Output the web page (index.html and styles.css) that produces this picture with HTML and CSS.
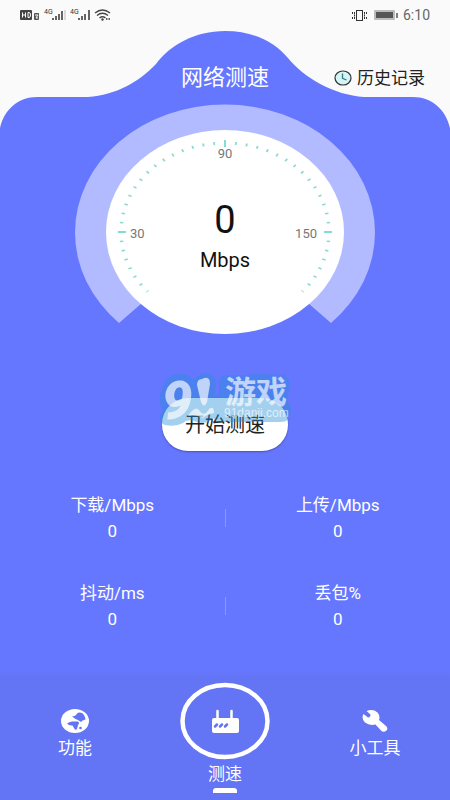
FILE: index.html
```html
<!DOCTYPE html>
<html lang="zh-CN">
<head>
<meta charset="utf-8">
<meta name="viewport" content="width=device-width, initial-scale=1">
<title>网络测速</title>
<link rel="stylesheet" href="styles.css">
</head>
<body>
<main class="hero">
  <svg class="hero-shape" viewBox="0 0 450 133" preserveAspectRatio="none" aria-hidden="true">
    <path d="M0 133V128C4 110 18 97 37 97H88C116 95 139 82 156 64C170 45 195 31 225 31C255 31 275 43 288 58C304 78 334 95 364 97H413C432 97 446 110 450 128V133Z"/>
  </svg>
  <div class="hero-content">
    <div class="status">
      <svg width="92" height="16" viewBox="0 0 92 16" aria-hidden="true">
        <rect x="0" y="3" width="12" height="10" rx="1" fill="#444"/>
        <path d="M2.500 5.500v5M5.500 5.500v5M2.500 8h3M8 5.500v5h1q1.500 0 1.500-2.500T9 5.500z" fill="none" stroke="#fff"/>
        <rect x="14" y="6" width="5" height="7" rx="1" fill="#555"/>
        <path d="M15 8h3l-2 3h2" fill="none" stroke="#fff"/>
        <text x="24" y="7" class="tiny">4G</text>
        <path d="M33 11v2M36 9v4M39 7v6M42 4v9" fill="none" stroke="#333" stroke-width="1.500"/>
        <path d="M45 3v10" stroke="#bbb"/>
        <text x="50" y="7" class="tiny">4G</text>
        <path d="M59 11v2M62 9v4M65 7v6M69 3v10" fill="none" stroke="#333" stroke-width="1.500"/>
        <path d="M75 6q7.500-6 15 0M77 8.500q5.500-4.500 11 0M79.500 11q3-2.500 6 0" fill="none" stroke="#444" stroke-width="1.300"/>
        <circle cx="82.500" cy="12.500" r="1.200" fill="#444"/><path d="M86 12h4" stroke="#666" stroke-width="2" stroke-dasharray="1.500 1"/>
      </svg>
      <div class="status-right">
        <svg width="48" height="14" viewBox="0 0 48 14" aria-hidden="true">
          <g fill="none" stroke="#333">
            <rect x="5.500" y="2.500" width="6" height="10"/>
            <path d="M3.500 4v7M13.500 4v7M1.500 4v2M1.500 9v2M15.500 4v2M15.500 9v2" stroke-width="1" stroke-dasharray="2 .5"/>
          </g>
          <rect x="23" y="2" width="21" height="10" rx="1" fill="#bbb"/>
          <rect x="25" y="4" width="17" height="6" fill="#555"/>
          <path d="M46 5v5" stroke="#555" stroke-width="1.500"/>
        </svg>
        <span>6:10</span>
      </div>
    </div>

    <header class="title-row">
      <h1>网络测速</h1>
      <a class="history" href="#history">
        <svg width="18" height="16" viewBox="0 0 18 16" aria-hidden="true">
          <ellipse cx="9" cy="8" rx="8" ry="7" fill="#d5f5f5" stroke="#2c3333" stroke-width="1.200"/>
          <path d="M8.500 3.500V8.300L12.500 10" fill="none" stroke="#337f88" stroke-width="1.300"/>
        </svg>
        历史记录
      </a>
    </header>

    <section class="gauge" aria-label="网速">
      <svg width="300" height="231" viewBox="0 0 300 231" aria-hidden="true">
        <path d="M44 219A150 128 0 1 1 256 219L225 192H75Z" fill="#b2bbff"/>
        <ellipse cx="150" cy="128" rx="119" ry="102" fill="#fff"/>
        <g transform="translate(150 128) scale(1 .856)" fill="none" stroke="#8fd8d2">
          <path d="M-77.300 69.600A104 104 0 1 1 77.300 69.600" pathLength="264" stroke-width="3.500" stroke-dasharray="1 5" stroke-dashoffset=".5"/>
        </g>
        <path d="M43 128h8M249 128h8M150 36v7" stroke="#83dcd6" stroke-width="2"/>
        <g class="scale">
          <text x="55" y="134">30</text>
          <text x="150" y="54" text-anchor="middle">90</text>
          <text x="242" y="134" text-anchor="end">150</text>
        </g>
      </svg>
      <p class="reading"><strong>0</strong><span>Mbps</span></p>
    </section>

    <div class="action">
      <button type="button">开始测速</button>
      <svg class="watermark" width="132" height="56" viewBox="0 0 132 56" aria-hidden="true">
        <path class="mark-outline" d="M6 11Q12 2 23 3Q31 4 35 9Q40 1 49 2Q57 4 57 13L56 24H60V12Q60 5 67 4H88L96 3L123 4Q131 6 131 14L128 30Q133 34 132 42Q131 51 122 51H64Q57 51 54 47Q48 54 38 51Q28 47 24 52Q17 56 6 54Q0 52 1 45L4 39Q0 34 1 24Z"/>
        <g class="mark-fill">
          <text x="3" y="48" class="nine">9</text>
          <path d="M43 8Q51 4 51 13L48 31Q45 38 42 31L38 14Q38 8 43 8Z"/>
          <path d="M29 45Q36 34 40 39Q45 47 50 38Q55 34 55 42Q48 43 44 47Q37 43 29 45Z"/>
          <text x="66" y="32" class="name">游戏</text>
          <text x="65" y="46" class="site">91danji.com</text>
        </g>
      </svg>
    </div>

    <section class="stats">
      <dl><dt>下载/Mbps</dt><dd>0</dd></dl>
      <i class="divider"></i>
      <dl><dt>上传/Mbps</dt><dd>0</dd></dl>
      <dl><dt>抖动/ms</dt><dd>0</dd></dl>
      <i class="divider"></i>
      <dl><dt>丢包%</dt><dd>0</dd></dl>
    </section>
  </div>
</main>

<nav class="tabs">
  <a href="#features">
    <svg width="28" height="24" viewBox="0 0 28 24" aria-hidden="true">
      <ellipse cx="14" cy="12" rx="14" ry="12" fill="#fff"/>
      <path d="M11 7.500Q15 7 16 4.500Q18 3 21 4Q24 6 24.500 10.500Q21 11 20 13L17 11Q14 10 11 7.500ZM6 14.500Q10 12 12 12.500L17 12.500Q19 14 17 16L16 20Q14 22 13 19L11.500 16.500Q8 17 6 14.500Z" fill="#6374f5"/>
      <circle cx="19.500" cy="19" r="1.300" fill="#6374f5"/>
    </svg>
    <span>功能</span>
  </a>
  <a class="current" href="#speed" aria-current="page">
    <svg width="90" height="78" viewBox="0 0 90 78" aria-hidden="true">
      <ellipse cx="45" cy="39" rx="42.500" ry="36" fill="none" stroke="#fff" stroke-width="4.500"/>
      <path d="M37.500 29v12M51.500 29v12" stroke="#fff" stroke-width="2.500" stroke-linecap="round"/>
      <rect x="32" y="36" width="27" height="15" rx="2" fill="#fff"/>
      <path d="M35 44.500l2-2M40 44.500l2-2M45 44.500l2-2" stroke="#6374f5" stroke-width="2.500" stroke-linecap="round"/>
    </svg>
    <span>测速</span>
  </a>
  <a href="#tools">
    <svg width="28" height="24" viewBox="0 0 28 24" aria-hidden="true">
      <path d="M5.500 2Q12-.5 16.500 3.500Q19.500 7 18 11L25 17Q27.500 19.500 25.500 21.500Q22.500 24 20 21.500L14.500 15.500Q8.500 17 4 13.500Q0 9.500 2.500 5L7 8.500Q9.500 8.500 9.500 5.500Z" fill="#fff"/>
    </svg>
    <span>小工具</span>
  </a>
</nav>
</body>
</html>
```
FILE: styles.css
```css
* {
  box-sizing: border-box;
}

body {
  margin: 0;
  min-height: 100vh;
  display: flex;
  flex-direction: column;
  background: #6677ff;
  color: #fff;
  font-family: Roboto, "Noto Sans CJK SC", sans-serif;
  font-size: 17px;
  line-height: 24px;
}

h1, p, dl, dd {
  margin: 0;
}

a {
  color: inherit;
  text-decoration: none;
}

svg {
  display: block;
}

.hero {
  flex: 1;
  display: grid;
  grid-template-columns: 1fr;
  align-items: start;
}

.hero-shape {
  grid-area: 1 / 1;
  width: 100%;
  height: 133px;
  background: #fafafa;
  fill: #6677ff;
}

.hero-content {
  grid-area: 1 / 1;
  z-index: 1;
}

.status {
  display: flex;
  justify-content: space-between;
  align-items: center;
  height: 30px;
  padding: 0 20px;
}

.status-right {
  display: flex;
  align-items: center;
  gap: 4px;
  color: #666;
  font-size: 14px;
}

.tiny {
  font-size: 7px;
  fill: #333;
}

.title-row {
  display: grid;
  grid-template-columns: 1fr auto 1fr;
  align-items: center;
  padding: 32px 25px 10px;
}

h1 {
  grid-column: 2;
  font-size: 22px;
  font-weight: 400;
  line-height: 32px;
}

.history {
  display: flex;
  justify-content: flex-end;
  align-items: center;
  gap: 5px;
  color: #222;
  white-space: nowrap;
}

.gauge {
  display: grid;
  justify-items: center;
}

.gauge > * {
  grid-area: 1 / 1;
}

.scale {
  fill: #777;
  font-size: 13px;
}

.reading {
  display: flex;
  flex-direction: column;
  align-items: center;
  gap: 8px;
  padding-top: 96px;
  color: #111;
  font-size: 20px;
}

.reading strong {
  font-size: 38px;
  font-weight: 400;
  line-height: 40px;
}

.action {
  position: relative;
  display: flex;
  justify-content: center;
  padding-top: 63px;
}

.action button {
  width: 126px;
  height: 53px;
  padding: 0;
  border: 0;
  border-radius: 26px;
  background: #fff;
  box-shadow: 0 1px 2px #4454b8;
  color: #222;
  font: inherit;
  font-size: 20px;
}

.watermark {
  position: absolute;
  top: 36px;
  left: calc(50% - 66px);
  pointer-events: none;
}

.mark-outline {
  fill: #268fd8;
  opacity: .42;
}

.mark-fill {
  fill: #fff;
  opacity: .65;
}

.nine {
  font: italic 900 54px Roboto, sans-serif;
}

.name {
  font: 700 31px "Noto Sans CJK SC", sans-serif;
}

.site {
  font: 12px "Liberation Sans", sans-serif;
}

.stats {
  display: grid;
  grid-template-columns: 1fr 1px 1fr;
  row-gap: 38px;
  align-items: center;
  padding: 42px 0 30px;
  text-align: center;
}

.stats dl {
  display: grid;
  gap: 2px;
}

.divider {
  height: 18px;
  background: #8997ff;
}

.tabs {
  display: grid;
  grid-template-columns: repeat(3, 1fr);
  align-items: start;
  height: 130px;
  padding: 12px 0 0;
  background: linear-gradient(#6677ff, #6374f5 8px);
}

.tabs a {
  display: flex;
  flex-direction: column;
  align-items: center;
  gap: 3px;
  padding-top: 27px;
}

.tabs .current {
  gap: 2px;
  padding-top: 0;
}

.current::after {
  content: "";
  width: 24px;
  height: 5px;
  border-radius: 3px 3px 0 0;
  background: #fff;
}
```
